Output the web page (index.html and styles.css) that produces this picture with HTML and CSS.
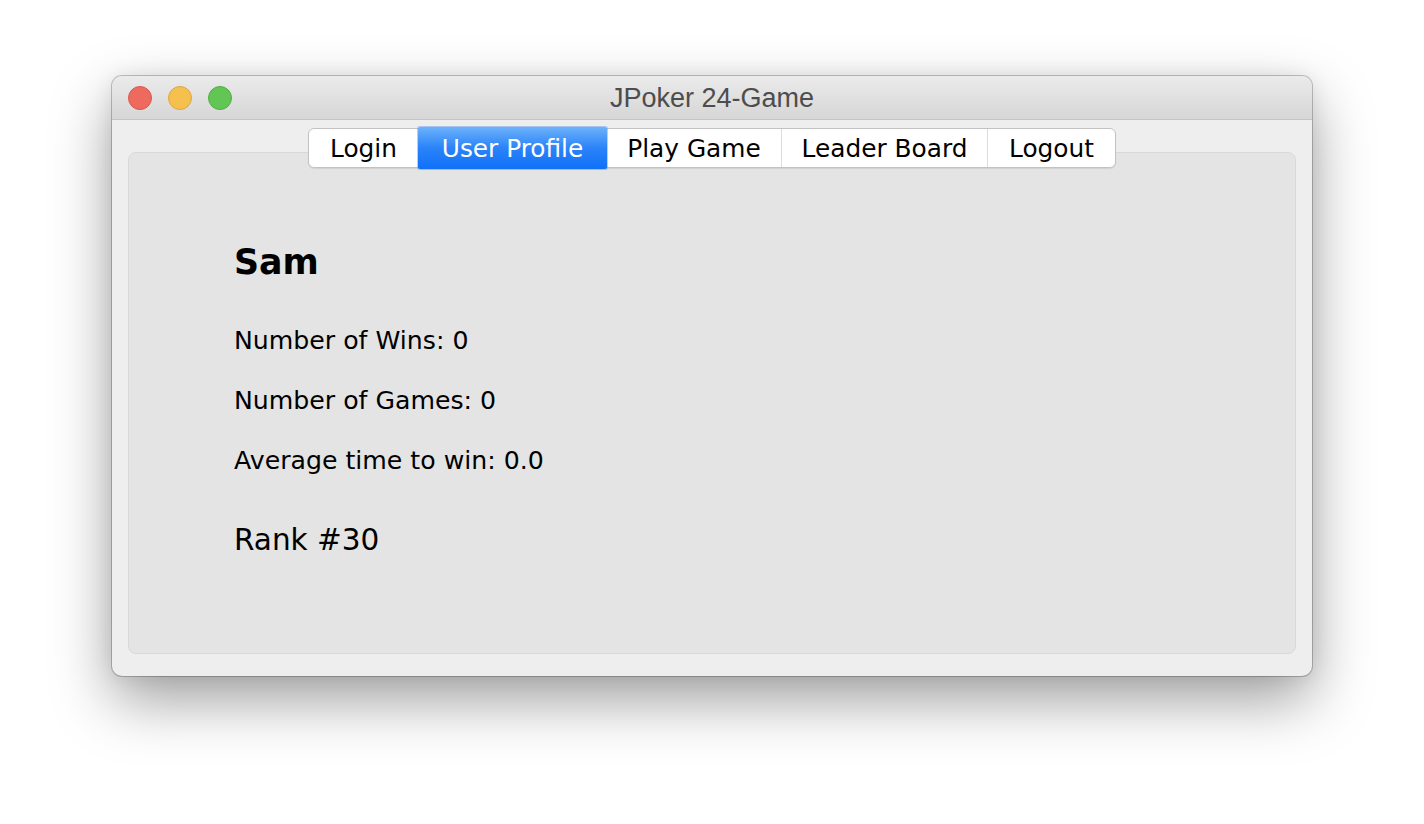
FILE: index.html
```html
<!DOCTYPE html>
<html>
<head>
<meta charset="utf-8">
<title>JPoker 24-Game</title>
<link rel="stylesheet" href="styles.css">
</head>
<body>
<div class="window">
  <div class="titlebar">
    <div class="lights">
      <span class="light red"></span>
      <span class="light yellow"></span>
      <span class="light green"></span>
    </div>
    <div class="title">JPoker 24-Game</div>
  </div>
  <div class="content">
    <div class="tabs">
      <div class="tab t-login">Login</div>
      <div class="tab t-profile active">User Profile</div>
      <div class="tab t-play">Play Game</div>
      <div class="tab t-leader">Leader Board</div>
      <div class="tab t-logout">Logout</div>
    </div>
    <div class="panel">
      <div class="name">Sam</div>
      <div class="stat">Number of Wins: 0</div>
      <div class="stat">Number of Games: 0</div>
      <div class="stat">Average time to win: 0.0</div>
      <div class="rank">Rank #30</div>
    </div>
  </div>
</div>
</body>
</html>
```
FILE: styles.css
```css
html, body {
  margin: 0;
  padding: 0;
  background: #ffffff;
}
body {
  width: 1424px;
  height: 824px;
  padding: 76px 0 0 112px;
  box-sizing: border-box;
  font-family: "DejaVu Sans", "Liberation Sans", sans-serif;
  overflow: hidden;
}
.window {
  width: 1200px;
  height: 600px;
  border-radius: 10px;
  background: #eeeeee;
  box-shadow: 0 0 0 1px rgba(0,0,0,0.22), 0 24px 60px rgba(0,0,0,0.38), 0 0 20px rgba(0,0,0,0.08);
  display: flex;
  flex-direction: column;
  overflow: hidden;
}
.titlebar {
  height: 43px;
  border-bottom: 1px solid #c4c4c4;
  background: linear-gradient(#ebebeb, #d6d6d6);
  display: flex;
  align-items: center;
  position: relative;
  flex-shrink: 0;
}
.lights {
  display: flex;
  gap: 16px;
  padding-left: 16px;
}
.light {
  width: 24px;
  height: 24px;
  border-radius: 50%;
  box-sizing: border-box;
}
.red { background: #ee6a5f; border: 1px solid #d6584e; }
.yellow { background: #f6c04f; border: 1px solid #dda73e; }
.green { background: #62c655; border: 1px solid #52ad46; }
.title {
  position: absolute;
  left: 0;
  right: 0;
  top: 0;
  bottom: 0;
  display: flex;
  align-items: center;
  justify-content: center;
  font-family: "Liberation Sans", Arial, sans-serif;
  font-size: 27px;
  color: #4d4d4d;
  padding-top: 2px;
}
.content {
  flex: 1;
  padding: 8px 16px 22px;
  display: flex;
  flex-direction: column;
}
.tabs {
  align-self: center;
  display: flex;
  height: 40px;
  box-sizing: border-box;
  border: 1px solid #c2c2c2;
  border-radius: 6px;
  background: #ffffff;
  position: relative;
  z-index: 1;
  box-shadow: 0 1px 1px rgba(0,0,0,0.08);
}
.tab {
  display: flex;
  align-items: center;
  justify-content: center;
  font-size: 24.8px;
  color: #000;
  border-left: 1px solid #dcdcdc;
  box-sizing: border-box;
  padding-top: 1px;
}
.tab:first-child { border-left: none; border-radius: 6px 0 0 6px; }
.tab:last-child { border-radius: 0 6px 6px 0; }
.t-login { width: 109px; }
.t-profile { width: 189px; }
.t-play { width: 174px; }
.t-leader { width: 206px; }
.t-logout { width: 128px; }
.tab.active {
  background: linear-gradient(#6db2fb, #2a83f9 50%, #1070f8);
  color: #ffffff;
  border-left: none;
  margin: -2px 0;
  border-radius: 2px;
  box-shadow: 0 0 0 1px rgba(40,120,240,0.35);
}
.tab.active + .tab { border-left: none; }
.panel {
  flex: 1;
  margin-top: -16px;
  background: #e4e4e4;
  border: 1px solid #d8d8d8;
  border-radius: 8px;
  padding: 89px 0 0 105px;
  display: flex;
  flex-direction: column;
  align-items: flex-start;
}
.name {
  font-weight: bold;
  font-size: 34.8px;
  line-height: 40px;
  height: 40px;
  margin-bottom: 29px;
}
.stat {
  font-size: 25.2px;
  line-height: 60px;
  height: 60px;
}
.rank {
  margin-top: 29px;
  font-size: 29.5px;
  line-height: 40px;
  height: 40px;
}
```
